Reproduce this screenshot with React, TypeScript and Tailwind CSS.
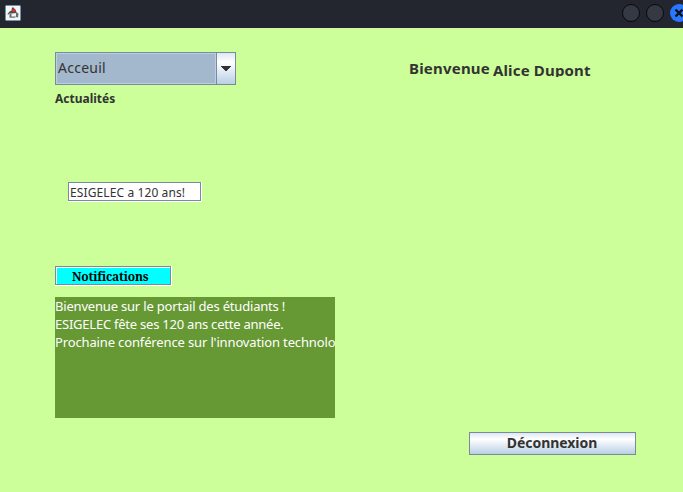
import React from "react";

function TitleBar() {
  return (
    <header className="flex h-7 items-start justify-between bg-[#23262f]">
      <svg className="ml-[5px] mt-[5px] h-4 w-4" viewBox="0 0 16 16">
        <rect x="0.5" y="0.5" width="15" height="15" rx="1" fill="#f4f5f6" stroke="#6d92a9" />
        <path d="M7 2.5 L8.5 2.5 L11 5.5 L11.5 8 L7 8.5 L4.5 8.5 L3 9.8 L2.5 9 L4.5 6.5 L6.5 5.5 Z" fill="#4b4e52" />
        <path d="M11 7 L13.5 8.5 L13 12.5 L11 12 L11 9 Z" fill="#6b6e71" />
        <path d="M4.5 9 L6.5 8.5 L6.5 11.5 L11 11.5 L10 12.8 L4.5 12.8 Z" fill="#6b6e71" />
        <circle cx="8.8" cy="5.5" r="1.8" fill="#e52d27" />
      </svg>
      <div className="mt-1 flex w-[61px] shrink-0 gap-[6px] overflow-hidden">
        <span className="h-[18px] w-[18px] shrink-0 rounded-full border border-[#08090c] bg-[#343944]" />
        <span className="h-[18px] w-[18px] shrink-0 rounded-full border border-[#08090c] bg-[#343944]" />
        <svg className="h-[18px] w-[18px] shrink-0" viewBox="0 0 18 18">
          <circle cx="9" cy="9" r="9" fill="#2777ff" />
          <path d="M5.5 5.5 L12.5 12.5 M12.5 5.5 L5.5 12.5" stroke="#0c111c" strokeWidth="2.4" />
        </svg>
      </div>
    </header>
  );
}

function PageSelect() {
  return (
    <button className="flex h-[33px] w-[181px] border border-[#7a8a99] text-left">
      <span className="flex h-full w-[160px] items-center border border-[#b8cfe5] bg-[#a3b8cc] pb-0.5 pl-px text-[14px] leading-none tracking-[0.25px]">
        Acceuil
      </span>
      <span className="flex h-full w-[19px] items-center justify-center border-l border-[#7a8a99] bg-linear-to-b from-[#dde8f3] via-white via-30% to-[#b8cfe5]">
        <svg className="h-[5px] w-[10px]" viewBox="0 0 10 5" shapeRendering="crispEdges">
          <path d="M0 0H10V1H9V2H8V3H7V4H6V5H4V4H3V3H2V2H1V1H0Z" fill="#333333" />
        </svg>
      </span>
    </button>
  );
}

export default function App() {
  return (
    <div className="flex h-[492px] w-[683px] flex-col overflow-hidden bg-[#ccff99] font-['Noto_Sans',sans-serif] text-[#333333]">
      <TitleBar />
      <main className="flex flex-1 pl-[55px] pt-6">
        <section className="flex w-[354px] flex-col items-start">
          <PageSelect />
          <h2 className="mt-[5px] h-[17px] text-[12px] font-bold leading-[17px]">Actualités</h2>
          <div className="ml-[13px] mt-[75px] h-5 w-[134px] border-b border-r border-white">
            <div className="h-[19px] w-[133px] whitespace-nowrap border border-[#7a8a99] bg-white pl-px text-[12px] leading-[19px] tracking-[0.11px]">
              ESIGELEC a 120 ans!
            </div>
          </div>
          <div className="mt-16 h-5 w-[117px] border-b border-r border-white">
            <div className="h-[19px] w-[116px] border border-[#7a8a99]">
              <div className="h-full border-l border-t border-white bg-[#00ffff] pl-[15px] font-['Noto_Serif','DejaVu_Serif_Condensed','DejaVu_Serif',serif] text-[12px] font-bold leading-[17px] tracking-[-0.18px] text-black">
                Notifications
              </div>
            </div>
          </div>
          <div className="mt-[11px] h-[121px] w-[280px] overflow-hidden whitespace-nowrap bg-[#669933] text-[13px] leading-[18px] text-white">
            <p className="tracking-[-0.19px]">Bienvenue sur le portail des étudiants !</p>
            <p className="tracking-[-0.23px]">ESIGELEC fête ses 120 ans cette année.</p>
            <p className="tracking-[-0.14px]">Prochaine conférence sur l'innovation technolo</p>
          </div>
        </section>
        <section className="flex w-[227px] flex-col">
          <div className="flex h-[26px] gap-[3px] whitespace-nowrap text-[15px] font-bold">
            <span className="mt-[6px] h-5 leading-5 tracking-[0.2px]">Bienvenue</span>
            <span className="mt-2 h-[17px] overflow-hidden leading-5 tracking-[0.16px]">Alice Dupont</span>
          </div>
          <button className="ml-[60px] mt-[354px] h-[23px] w-[167px] border border-[#7a8a99] bg-linear-to-b from-[#dde8f3] via-white via-30% to-[#b8cfe5] pb-0.5 pr-px text-[14px] font-bold leading-[19px] tracking-[-0.05px]">
            Déconnexion
          </button>
        </section>
      </main>
    </div>
  );
}
